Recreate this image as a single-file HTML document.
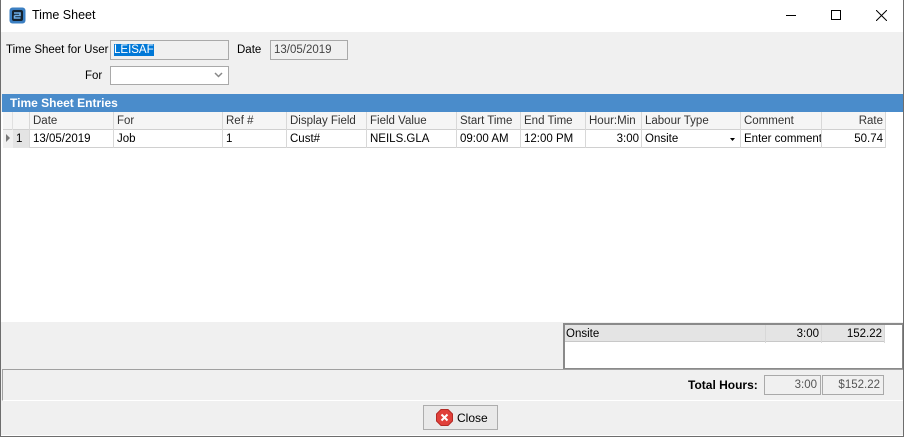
<!DOCTYPE html>
<html><head><meta charset="utf-8"><style>
*{margin:0;padding:0;box-sizing:border-box}
body{width:905px;height:437px;position:relative;background:#fff;font-family:"Liberation Sans",Arial,sans-serif;font-size:11.5px;color:#000;overflow:hidden}
.a{position:absolute}
.win{left:0;top:0;width:904px;height:437px;border:1px solid #6d6d6d;border-top:none}
.title{left:1px;top:0;width:902px;height:32px;background:#fff}
.body{left:1px;top:32px;width:902px;height:403px;background:#f0f0f0}
.tb{border:1px solid #a9a9a9;background:#f0f0f0;height:20px;padding:3px 3px;color:#555}
.cell{position:absolute;top:0;height:18px;border-right:1px solid #d8d8d8;padding:3px 2px 0 3px;white-space:nowrap;overflow:hidden}
.hdr{left:3px;top:112px;width:883px;height:18px;background:#f5f5f5;border-bottom:1px solid #d0d0d0;color:#333}
.row{left:3px;top:130px;width:883px;height:18px;background:#fff;border-bottom:1px solid #d0d0d0}
.r{text-align:right;padding-right:2px}
</style></head><body>
<div class="a title">
 <svg class="a" style="left:8px;top:7px" width="17" height="17" viewBox="0 0 17 17"><rect x="0.5" y="0.5" width="16" height="16" rx="3" fill="#3b7fc2"/><rect x="3" y="3" width="11" height="11" rx="2" fill="#14222e"/><path d="M5 6h6v2.5H5.5M5.5 8.5v2.5H11.5" stroke="#6fb0ea" stroke-width="1.6" fill="none"/></svg>
 <div class="a" style="left:31px;top:8px;font-size:12.5px">Time Sheet</div>
 <div class="a" style="left:785px;top:15px;width:10px;height:1px;background:#000"></div>
 <div class="a" style="left:830px;top:10px;width:10px;height:10px;border:1px solid #000"></div>
 <svg class="a" style="left:875px;top:10px" width="11" height="11"><path d="M0 0L11 11M11 0L0 11" stroke="#000" stroke-width="1"/></svg>
</div>
<div class="a body"></div>
<div class="a" style="left:6px;top:44px">Time Sheet for User</div>
<div class="a tb" style="left:110px;top:40px;width:119px;color:#000"><span style="background:#0078d7;color:#fff">LEISAF</span></div>
<div class="a" style="left:237px;top:44px">Date</div>
<div class="a tb" style="left:270px;top:40px;width:78px;color:#444">13/05/2019</div>
<div class="a" style="left:85px;top:70px">For</div>
<div class="a" style="left:110px;top:66px;width:119px;height:19px;border:1px solid #a9a9a9;background:#fff"></div>
<svg class="a" style="left:214px;top:72px" width="9" height="6"><path d="M1 1L4.5 4.5L8 1" stroke="#888" stroke-width="1.5" fill="none"/></svg>
<div class="a" style="left:2px;top:94px;width:901px;height:18px;background:#4a8ccb;color:#fff;font-weight:bold;padding:2px 0 0 8px;font-size:12px">Time Sheet Entries</div>
<div class="a" style="left:1px;top:112px;width:902px;height:210px;background:#fff"></div>
<div class="a hdr">
 <div class="cell" style="left:0;width:10px;border-right:1px solid #e0e0e0"></div>
 <div class="cell" style="left:10px;width:17px"></div>
 <div class="cell" style="left:27px;width:84px">Date</div>
 <div class="cell" style="left:111px;width:109px">For</div>
 <div class="cell" style="left:220px;width:64px">Ref #</div>
 <div class="cell" style="left:284px;width:80px">Display Field</div>
 <div class="cell" style="left:364px;width:90px">Field Value</div>
 <div class="cell" style="left:454px;width:64px">Start Time</div>
 <div class="cell" style="left:518px;width:65px">End Time</div>
 <div class="cell" style="left:583px;width:56px">Hour:Min</div>
 <div class="cell" style="left:639px;width:99px">Labour Type</div>
 <div class="cell" style="left:738px;width:81px">Comment</div>
 <div class="cell r" style="left:819px;width:64px">Rate</div>
</div>
<div class="a row">
 <div class="cell" style="left:0;width:10px;background:#f0f0f0;border-right:none"><svg width="5" height="8" style="margin-top:1px"><path d="M0 0L4 4L0 8z" fill="#777"/></svg></div>
 <div class="cell" style="left:10px;width:17px;background:#e4e4e4">1</div>
 <div class="cell" style="left:27px;width:84px">13/05/2019</div>
 <div class="cell" style="left:111px;width:109px">Job</div>
 <div class="cell" style="left:220px;width:64px">1</div>
 <div class="cell" style="left:284px;width:80px">Cust#</div>
 <div class="cell" style="left:364px;width:90px">NEILS.GLA</div>
 <div class="cell" style="left:454px;width:64px">09:00 AM</div>
 <div class="cell" style="left:518px;width:65px">12:00 PM</div>
 <div class="cell r" style="left:583px;width:56px">3:00</div>
 <div class="cell" style="left:639px;width:99px">Onsite<svg class="a" style="left:88px;top:8px" width="5" height="3"><path d="M0 0H5L2.5 3z" fill="#000"/></svg></div>
 <div class="cell" style="left:738px;width:81px">Enter comment</div>
 <div class="cell r" style="left:819px;width:64px">50.74</div>
</div>
<div class="a" style="left:563px;top:323px;width:340px;height:46px;border:1px solid #8a8a8a;border-left:2px solid #8a8a8a;border-top:2px solid #8a8a8a;background:#fff"></div>
<div class="a" style="left:565px;top:325px;width:320px;height:17px;background:#e4e4e4;border-bottom:1px solid #c8c8c8">
 <div class="cell" style="left:0;width:201px;padding-left:1px">Onsite</div>
 <div class="cell r" style="left:201px;width:56px">3:00</div>
 <div class="cell r" style="left:257px;width:63px">152.22</div>
</div>
<div class="a" style="left:2px;top:369px;width:901px;height:32px;border-top:1px solid #a0a0a0;border-left:1px solid #a0a0a0;border-bottom:1px solid #fff"></div>
<div class="a" style="left:688px;top:378px;font-weight:bold;font-size:12px">Total Hours:</div>
<div class="a tb" style="left:764px;top:375px;width:57px;text-align:right;color:#555">3:00</div>
<div class="a tb" style="left:822px;top:375px;width:62px;text-align:right;color:#555">$152.22</div>
<div class="a" style="left:423px;top:405px;width:75px;height:25px;border:1px solid #adadad;background:#e9e9e9"></div>
<svg class="a" style="left:436px;top:409px" width="17" height="17" viewBox="0 0 17 17"><path d="M5 0.5H12L16.5 5V12L12 16.5H5L0.5 12V5Z" fill="#e0403a" stroke="#b52a25"/><path d="M5.5 5.5L11.5 11.5M11.5 5.5L5.5 11.5" stroke="#fff" stroke-width="2"/></svg>
<div class="a" style="left:457px;top:411px;font-size:12px">Close</div>
<div class="a win"></div>
</body></html>
